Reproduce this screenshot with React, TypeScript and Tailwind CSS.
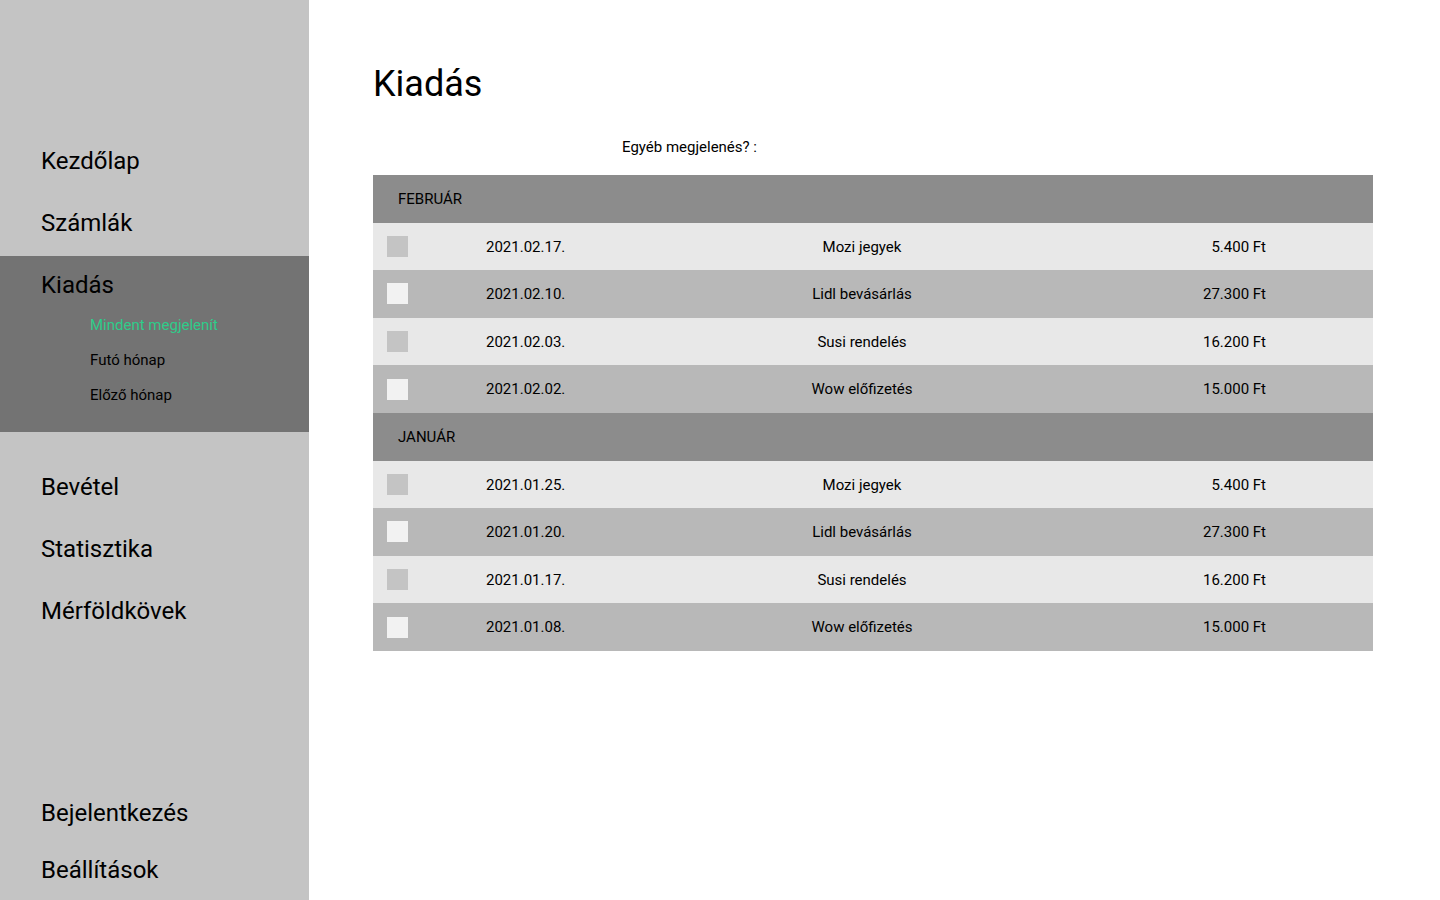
const topNav = ["Kezdőlap", "Számlák"];
const midNav = ["Bevétel", "Statisztika", "Mérföldkövek"];
const bottomNav = ["Bejelentkezés", "Beállítások"];
const subNav = [
  { label: "Mindent megjelenít", active: true },
  { label: "Futó hónap", active: false },
  { label: "Előző hónap", active: false },
];

const months = [
  {
    name: "Február",
    rows: [
      { date: "2021.02.17.", title: "Mozi jegyek", amount: "5.400 Ft" },
      { date: "2021.02.10.", title: "Lidl bevásárlás", amount: "27.300 Ft" },
      { date: "2021.02.03.", title: "Susi rendelés", amount: "16.200 Ft" },
      { date: "2021.02.02.", title: "Wow előfizetés", amount: "15.000 Ft" },
    ],
  },
  {
    name: "Január",
    rows: [
      { date: "2021.01.25.", title: "Mozi jegyek", amount: "5.400 Ft" },
      { date: "2021.01.20.", title: "Lidl bevásárlás", amount: "27.300 Ft" },
      { date: "2021.01.17.", title: "Susi rendelés", amount: "16.200 Ft" },
      { date: "2021.01.08.", title: "Wow előfizetés", amount: "15.000 Ft" },
    ],
  },
];

function NavItem({ label, h = "h-[62px]" }: { label: string; h?: string }) {
  return (
    <a href="#" className={`flex ${h} items-center pl-[41px] text-[24px] leading-[28px] text-black`}>
      {label}
    </a>
  );
}

export default function App() {
  return (
    <div className="flex h-[900px] w-full bg-white font-['Roboto',sans-serif] text-black">
      <aside className="flex w-[309px] shrink-0 flex-col bg-[#c4c4c4] pt-[130px] pb-[2px]">
        {topNav.map((item) => (
          <NavItem key={item} label={item} />
        ))}
        <div className="mt-[2px] bg-[#737373] pt-[15px] pb-[19px]">
          <div className="pl-[41px] text-[24px] leading-[28px]">Kiadás</div>
          <ul className="mt-[9px]">
            {subNav.map((item) => (
              <li key={item.label}>
                <a
                  href="#"
                  className={`block pl-[90px] text-[15px] leading-[35px] ${item.active ? "text-[#2ecc8a]" : "text-black"}`}
                >
                  {item.label}
                </a>
              </li>
            ))}
          </ul>
        </div>
        <div className="mt-[24px]">
          {midNav.map((item) => (
            <NavItem key={item} label={item} />
          ))}
        </div>
        <div className="mt-auto">
          {bottomNav.map((item) => (
            <NavItem key={item} label={item} h="h-[57px]" />
          ))}
        </div>
      </aside>

      <main className="flex-1 pl-[64px] pt-[63px]">
        <h1 className="text-[36px] leading-[42px] font-normal">Kiadás</h1>
        <p className="mt-[32px] ml-[249px] text-[15px] leading-[20px]">Egyéb megjelenés? :</p>
        <div className="mt-[18px] w-[1000px]">
          {months.map((month) => (
            <div key={month.name}>
              <div className="flex h-[47.6px] items-center bg-[#8c8c8c] pt-[1px] pl-[25px] text-[15px] uppercase">
                {month.name}
              </div>
              {month.rows.map((row, i) => {
                const dark = i % 2 === 1;
                return (
                  <div
                    key={row.date}
                    className={`grid h-[47.6px] grid-cols-[113px_250px_252px_278px_1fr] items-center text-[15px] ${dark ? "bg-[#b8b8b8]" : "bg-[#e8e8e8]"}`}
                  >
                    <div className="pl-[14px]">
                      <div className={`h-[21px] w-[21px] ${dark ? "bg-[#f2f2f2]" : "bg-[#c4c4c4]"}`} />
                    </div>
                    <div className="pt-[1px]">{row.date}</div>
                    <div className="pt-[1px] text-center">{row.title}</div>
                    <div className="pt-[1px] text-right">{row.amount}</div>
                    <div />
                  </div>
                );
              })}
            </div>
          ))}
        </div>
      </main>
    </div>
  );
}
